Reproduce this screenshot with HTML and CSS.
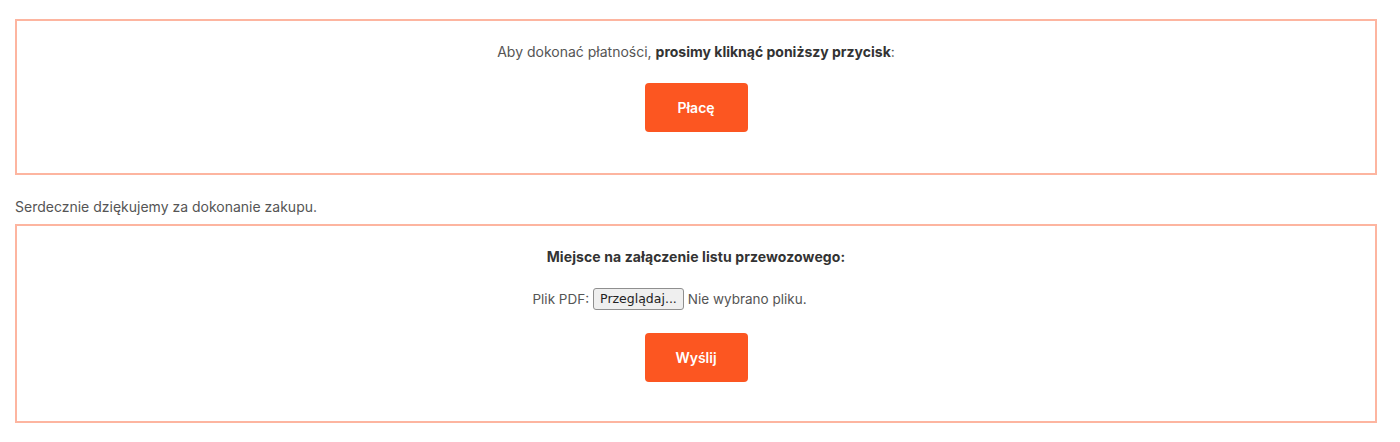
FILE: index.html
```html
<!DOCTYPE html>
<html lang="pl">
<head>
<meta charset="utf-8">
<title>Płatność</title>
<link rel="stylesheet" href="styles.css">
</head>
<body>
<div class="page">
  <section class="box box-pay">
    <p class="lead">Aby dokonać płatności, <strong>prosimy kliknąć poniższy przycisk</strong>:</p>
    <button class="btn" type="button">Płacę</button>
  </section>
  <p class="thanks">Serdecznie dziękujemy za dokonanie zakupu.</p>
  <section class="box box-upload">
    <p class="heading">Miejsce na załączenie listu przewozowego:</p>
    <div class="file-row">
      <span class="file-label">Plik PDF:</span>
      <span class="file-btn">Przeglądaj...</span>
      <span class="file-name">Nie wybrano pliku.</span>
    </div>
    <button class="btn btn-send" type="button">Wyślij</button>
  </section>
</div>
</body>
</html>
```

FILE: styles.css
```css
* { box-sizing: border-box; }
html, body { margin: 0; padding: 0; background: #fff; }
body {
  font-family: Inter, "Noto Sans", "Liberation Sans", sans-serif;
  font-size: 14px;
  color: #555;
}
.page {
  padding: 19px 23px 0 15px;
}
.box {
  border: 2px solid #fdb5a0;
  display: flex;
  flex-direction: column;
  align-items: center;
}
.box p { margin: 0; }
.box-pay {
  height: 156px;
  padding-top: 22px;
}
.lead { line-height: 18px; }
.lead strong { color: #333; font-weight: 700; }
.btn {
  width: 103px;
  height: 49px;
  border: none;
  border-radius: 4px;
  background: #fc5621;
  color: #fff;
  font-family: inherit;
  font-size: 14px;
  font-weight: 600;
  margin-top: 22px;
  cursor: pointer;
}
.thanks {
  margin: 0;
  padding: 23px 0 8px;
  line-height: 18px;
}
.box-upload {
  height: 199px;
  padding-top: 22px;
}
.heading { color: #333; font-weight: 700; line-height: 18px; letter-spacing: 0.1px; }
.file-row {
  display: flex;
  align-items: center;
  gap: 4px;
  margin-top: 22px;
  padding-right: 53px;
  font-size: 13.5px;
}
.file-btn {
  display: inline-block;
  height: 22px;
  line-height: 20px;
  padding: 0 6px;
  border: 1px solid #8f8f8f;
  border-radius: 3px;
  background: #efefef;
  color: #222;
  font-family: "DejaVu Sans", sans-serif;
  font-size: 12.5px;
}
.btn-send { margin-top: 23px; }
```
